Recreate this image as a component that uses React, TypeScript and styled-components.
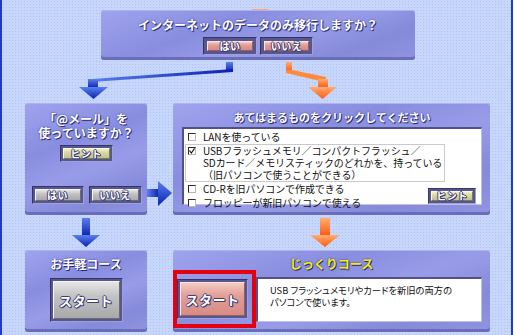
import React from "react";
import styled, { createGlobalStyle } from "styled-components";

type Tone = "pink" | "gray" | "khaki";

const tones: Record<Tone, { bg: string; light: string; dark: string }> = {
  pink: {
    bg: "linear-gradient(#f4cac2, #e29e96 40%, #d68c86)",
    light: "#fde6e2",
    dark: "#9a5a5e",
  },
  gray: {
    bg: "linear-gradient(#e6e6e6, #c2c2c2 40%, #a9a9a9)",
    light: "#f6f6f6",
    dark: "#6c6c6c",
  },
  khaki: {
    bg: "linear-gradient(#f0f0c8, #d8d8a2 40%, #c2c28a)",
    light: "#fbfbe4",
    dark: "#7c7c50",
  },
};

const GlobalStyle = createGlobalStyle`
  html, body {
    margin: 0;
    padding: 0;
  }
  body {
    width: 515px;
    height: 335px;
    overflow: hidden;
    background: #ffffff;
    font-family: "Noto Sans CJK JP", "Noto Sans", sans-serif;
  }
`;

const Screen = styled.div`
  width: 513px;
  height: 335px;
  box-sizing: border-box;
  border-left: 2px solid #1a3ad0;
  border-right: 2px solid #1a3ad0;
  background-color: #c7d7fb;
  background-image: radial-gradient(circle, #b2c2f3 0.6px, transparent 0.9px);
  background-size: 3px 3px;
  display: flex;
  flex-direction: column;
`;

const Panel = styled.div`
  box-sizing: border-box;
  border-radius: 3px;
  background: linear-gradient(
    160deg,
    #a0a4ee 0%,
    #888ddf 35%,
    #989ce8 58%,
    #858ad9 80%,
    #9094e2 100%
  );
  box-shadow: inset 0 1px 0 #aeb2f4, inset 0 -3px 0 #6a6eba;
`;

const Title = styled.div<{ $color?: string; $size?: number }>`
  font-size: ${({ $size }) => $size ?? 12}px;
  line-height: 14px;
  font-weight: bold;
  color: ${({ $color }) => $color || "#ffffff"};
  text-align: center;
  text-shadow: 1px 1px 0 #2c2c78, 0 0 2px #3a3a90;
  white-space: nowrap;
`;

const TopArrowBar = styled.div`
  height: 10px;
  padding-left: 248px;
`;

const QuestionPanel = styled(Panel)`
  margin-left: 99px;
  width: 314px;
  height: 50px;
  padding-top: 8px;
  display: flex;
  flex-direction: column;
  align-items: center;
`;

const ButtonRow = styled.div<{ $gap: number }>`
  display: flex;
  gap: ${({ $gap }) => $gap}px;
  margin-top: 5px;
`;

const ButtonFrame = styled.div<{ $w: number; $h: number; $pad?: number }>`
  width: ${({ $w }) => $w}px;
  height: ${({ $h }) => $h}px;
  box-sizing: border-box;
  padding: ${({ $pad }) => $pad ?? 2}px;
  background: #57578f;
  border: 1px solid;
  border-color: #34346a #a0a0dc #a0a0dc #34346a;
  display: flex;
`;

const ButtonFace = styled.div<{ $tone: Tone; $size: number }>`
  flex: 1;
  display: flex;
  align-items: center;
  justify-content: center;
  border: 1px solid;
  border-color: ${({ $tone }) =>
    `${tones[$tone].light} ${tones[$tone].dark} ${tones[$tone].dark} ${tones[$tone].light}`};
  background: ${({ $tone }) => tones[$tone].bg};
  color: #ffffff;
  font-weight: bold;
  font-size: ${({ $size }) => $size}px;
  line-height: 1;
  letter-spacing: 0.5px;
  text-shadow: -1px 0 #3c3c7a, 1px 0 #3c3c7a, 0 -1px #3c3c7a, 0 1px #3c3c7a,
    1px 1px #3c3c7a;
  white-space: nowrap;
`;

const Connector = styled.svg`
  display: block;
  flex: none;
`;

const PanelRow = styled.div<{ $h: number }>`
  display: grid;
  grid-template-columns: 122px 26px 317px;
  padding-left: 23px;
  height: ${({ $h }) => $h}px;
  flex: none;
`;

const AskPanel = styled(Panel)`
  display: flex;
  flex-direction: column;
  align-items: center;
  padding: 9px 0 11px;
`;

const HintSlot = styled.div`
  margin-top: 5px;
`;

const AskButtons = styled.div`
  margin-top: auto;
  display: flex;
  gap: 5px;
  padding-left: 1px;
`;

const SideArrow = styled.svg`
  display: block;
  margin-top: 77px;
`;

const ChoicePanel = styled(Panel)`
  padding: 7px 8px 0 9px;
`;

const WhiteBox = styled.div<{ $h: number }>`
  box-sizing: border-box;
  height: ${({ $h }) => $h}px;
  background: #ffffff;
  border-top: 2px solid #51518a;
  border-left: 2px solid #51518a;
  border-right: 1px solid #c0c0e4;
  border-bottom: 1px solid #c0c0e4;
`;

const ChoiceBox = styled(WhiteBox)`
  margin-top: 3px;
  display: flex;
  padding: 1px 0 0 1px;
`;

const ChoiceList = styled.div`
  flex: 1;
  min-width: 0;
  display: flex;
  flex-direction: column;
`;

const ChoiceItem = styled.div<{ $selected?: boolean }>`
  display: flex;
  align-items: flex-start;
  width: fit-content;
  padding: 0 2px;
  border: 1px solid ${({ $selected }) => ($selected ? "#c9c9d4" : "transparent")};
  font-size: 10px;
  line-height: 12px;
  letter-spacing: -0.1px;
  color: #111111;
  white-space: nowrap;
`;

const Check = styled.span`
  flex: none;
  width: 8px;
  height: 8px;
  box-sizing: border-box;
  margin-top: 2px;
  margin-right: 7px;
  background: #ffffff;
  border: 1px solid;
  border-color: #2a2a2a #b8b8b8 #b8b8b8 #2a2a2a;
  display: flex;
  align-items: center;
  justify-content: center;
`;

const HintCorner = styled.div`
  flex: none;
  align-self: flex-end;
  margin-right: 5px;
`;

const ArrowRow = styled.div`
  display: grid;
  grid-template-columns: 122px 26px 317px;
  padding-left: 23px;
  height: 35px;
  flex: none;
`;

const DownArrow = styled.svg<{ $offset: number }>`
  display: block;
  margin-left: ${({ $offset }) => $offset}px;
`;

const CoursePanel = styled(Panel)`
  display: flex;
  flex-direction: column;
  align-items: center;
`;

const CourseTitle = styled(Title)`
  padding-top: 8px;
  line-height: 12px;
`;

const EasyStart = styled.div`
  margin-top: 8px;
`;

const DeepPanel = styled(Panel)`
  display: flex;
  flex-direction: column;
`;

const DeepRow = styled.div`
  display: flex;
  align-items: flex-start;
`;

const Selection = styled.div`
  width: 83px;
  height: 58px;
  box-sizing: border-box;
  border: 4px solid #e4000e;
  padding: 5px 2px 3px 0;
`;

const DescBox = styled(WhiteBox)`
  flex: 1;
  margin: 7px 8px 0 0;
  padding: 5px 0 0 12px;
  font-size: 9.3px;
  line-height: 12px;
  font-feature-settings: "palt";
  color: #111111;
  white-space: nowrap;
`;

const Button: React.FC<{
  tone: Tone;
  w: number;
  h: number;
  size?: number;
  pad?: number;
  children: React.ReactNode;
}> = ({ tone, w, h, size = 10, pad, children }) => (
  <ButtonFrame $w={w} $h={h} $pad={pad}>
    <ButtonFace $tone={tone} $size={size}>
      {children}
    </ButtonFace>
  </ButtonFrame>
);

const Gradients = () => (
  <defs>
    <linearGradient id="blueG" x1="0" y1="0" x2="0" y2="1">
      <stop offset="0" stopColor="#5a80ee" />
      <stop offset="1" stopColor="#0a22b2" />
    </linearGradient>
    <linearGradient id="orangeG" x1="0" y1="0" x2="0" y2="1">
      <stop offset="0" stopColor="#ffae70" />
      <stop offset="1" stopColor="#ff5812" />
    </linearGradient>
    <linearGradient id="blueH" x1="0" y1="0" x2="1" y2="0">
      <stop offset="0" stopColor="#5a80ee" />
      <stop offset="1" stopColor="#0a22b2" />
    </linearGradient>
  </defs>
);

const choices = [
  { id: "lan", lines: ["LANを使っている"] },
  {
    id: "usb",
    selected: true,
    lines: [
      "USBフラッシュメモリ／コンパクトフラッシュ／",
      "SDカード／メモリスティックのどれかを、持っている",
      "（旧パソコンで使うことができる）",
    ],
  },
  { id: "cdr", lines: ["CD-Rを旧パソコンで作成できる"] },
  { id: "fd", lines: ["フロッピーが新旧パソコンで使える"] },
];

const App: React.FC = () => {
  return (
    <>
      <GlobalStyle />
      <Screen>
        <TopArrowBar>
          <svg width="20" height="10">
            <Gradients />
            <polygon points="1,0 19,0 10,7" fill="url(#orangeG)" />
          </svg>
        </TopArrowBar>

        <QuestionPanel>
          <Title>インターネットのデータのみ移行しますか？</Title>
          <ButtonRow $gap={3}>
            <Button tone="pink" w={54} h={18} pad={3}>
              はい
            </Button>
            <Button tone="pink" w={53} h={18} pad={3}>
              いいえ
            </Button>
          </ButtonRow>
        </QuestionPanel>

        <Connector width="509" height="43">
          <Gradients />
          <rect x="224" y="2" width="7" height="10" fill="url(#blueG)" />
          <polygon points="231,9 231,12 90,22 90,19" fill="url(#blueH)" />
          <rect x="86" y="19" width="10" height="9" fill="url(#blueG)" />
          <polygon points="77,27 106,27 91.5,39" fill="url(#blueG)" />

          <rect x="284" y="2" width="6" height="10" fill="url(#orangeG)" />
          <polygon points="284,10 290,10 324,17 324,21 318,21 284,13" fill="#ff8a3c" />
          <rect x="316" y="19" width="10" height="9" fill="url(#orangeG)" />
          <polygon points="306,27 335,27 320.5,39" fill="url(#orangeG)" />
        </Connector>

        <PanelRow $h={112}>
          <AskPanel>
            <Title>
              「@メール」を
              <br />
              使っていますか？
            </Title>
            <HintSlot>
              <Button tone="khaki" w={53} h={17}>
                ヒント
              </Button>
            </HintSlot>
            <AskButtons>
              <Button tone="gray" w={52} h={18}>
                はい
              </Button>
              <Button tone="gray" w={53} h={18}>
                いいえ
              </Button>
            </AskButtons>
          </AskPanel>

          <SideArrow width="26" height="28">
            <Gradients />
            <rect x="0" y="9" width="12" height="8" fill="url(#blueH)" />
            <polygon points="11,1 25,13 11,26" fill="url(#blueG)" />
          </SideArrow>

          <ChoicePanel>
            <Title $size={11}>あてはまるものをクリックしてください</Title>
            <ChoiceBox $h={78}>
              <ChoiceList>
                {choices.map((c) => (
                  <ChoiceItem key={c.id} $selected={c.selected}>
                    <Check>
                      {c.selected && (
                        <svg width="6" height="6" viewBox="0 0 6 6">
                          <path d="M0.5 2.5 L2.3 5 L5.6 0.4" fill="none" stroke="#111" strokeWidth="1.1" />
                        </svg>
                      )}
                    </Check>
                    <span>
                      {c.lines.map((l, i) => (
                        <React.Fragment key={i}>
                          {i > 0 && <br />}
                          {l}
                        </React.Fragment>
                      ))}
                    </span>
                  </ChoiceItem>
                ))}
              </ChoiceList>
              <HintCorner>
                <Button tone="khaki" w={48} h={16}>
                  ヒント
                </Button>
              </HintCorner>
            </ChoiceBox>
          </ChoicePanel>
        </PanelRow>

        <ArrowRow>
          <DownArrow $offset={47} width="28" height="35">
            <Gradients />
            <rect x="10" y="3" width="8" height="18" fill="url(#blueG)" />
            <polygon points="0,20 28,20 14,32" fill="url(#blueG)" />
          </DownArrow>
          <span />
          <DownArrow $offset={137} width="30" height="35">
            <Gradients />
            <rect x="10" y="3" width="10" height="18" fill="url(#orangeG)" />
            <polygon points="0,20 30,20 15,32" fill="url(#orangeG)" />
          </DownArrow>
        </ArrowRow>

        <PanelRow $h={82}>
          <CoursePanel>
            <CourseTitle>お手軽コース</CourseTitle>
            <EasyStart>
              <Button tone="gray" w={73} h={44} size={13} pad={2}>
                スタート
              </Button>
            </EasyStart>
          </CoursePanel>
          <span />
          <DeepPanel>
            <CourseTitle $color="#f6f000">じっくりコース</CourseTitle>
            <DeepRow>
              <Selection>
                <Button tone="pink" w={71} h={40} size={13} pad={2}>
                  スタート
                </Button>
              </Selection>
              <DescBox $h={45}>
                USB フラッシュメモリやカードを新旧の両方の
                <br />
                パソコンで使います。
              </DescBox>
            </DeepRow>
          </DeepPanel>
        </PanelRow>
      </Screen>
    </>
  );
};

export default App;
